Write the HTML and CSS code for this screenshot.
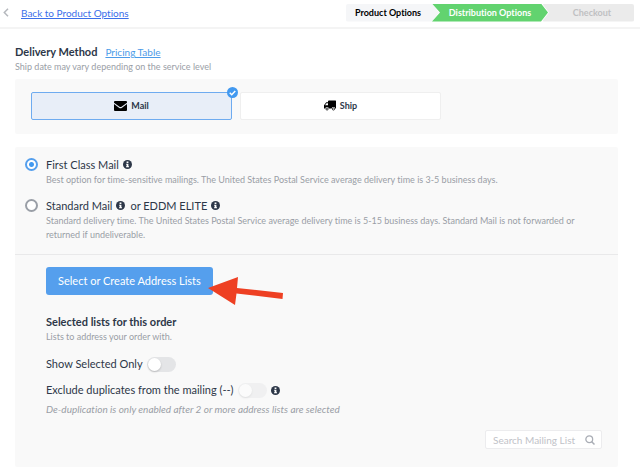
FILE: index.html
```html
<!DOCTYPE html>
<html lang="en">
<head>
<meta charset="utf-8">
<meta name="viewport" content="width=device-width, initial-scale=1">
<title>Distribution Options</title>
<link rel="stylesheet" href="styles.css">
</head>
<body>
<svg class="defs" aria-hidden="true">
  <symbol id="info" viewBox="0 0 20 20">
    <circle cx="10" cy="10" r="10" fill="#2d3748"/>
    <path d="M8 3.5h4v3.4H8zM7 8.3h5v5.4h1.4v2.4H6.8v-2.4h1.3v-3H7z" fill="#fff"/>
  </symbol>
</svg>
<header class="topbar">
  <a class="back" href="#">
    <svg class="chevron" viewBox="0 0 6 9" aria-hidden="true"><path d="M5 .8 1.3 4.5 5 8.2" fill="none" stroke="#b5b8bd" stroke-width="1.5"/></svg>
    <span class="back-text">Back to Product Options</span>
  </a>
  <ol class="steps">
    <li class="step done">Product Options</li>
    <li class="step current" aria-current="step">Distribution Options</li>
    <li class="step next">Checkout</li>
  </ol>
</header>
<main class="content">
  <div class="title-row">
    <h1 class="title">Delivery Method</h1>
    <a class="pricing" href="#">Pricing Table</a>
  </div>
  <p class="note">Ship date may vary depending on the service level</p>

  <section class="card methods">
    <button class="method selected" type="button" aria-pressed="true">
      <svg class="mail-icon" viewBox="0 0 26 20" aria-hidden="true"><path d="M2 0h22a2 2 0 0 1 2 2v1.5L15 11.4q-2 1.4-4 0L0 3.5V2a2 2 0 0 1 2-2zM0 6l10 7.3q3 2 6 0L26 6v12a2 2 0 0 1-2 2H2a2 2 0 0 1-2-2z"/></svg>
      Mail
      <svg class="check" viewBox="0 0 22 22" aria-hidden="true"><circle cx="11" cy="11" r="11" fill="#4299f0"/><path d="m5.5 11.5 4 4 7-7.5" fill="none" stroke="#fff" stroke-width="3"/></svg>
    </button>
    <button class="method" type="button" aria-pressed="false">
      <svg class="ship-icon" viewBox="0 0 24 20" aria-hidden="true"><path d="M10 0h13a1 1 0 0 1 1 1v15h-1.6a3.6 3.6 0 0 0-7 0H9.6a3.6 3.6 0 0 0-7 0H0V9.500L4.500 3.500H8V1.500Q8 0 10 0zM5 5.500 2 9.500h6v-4z" fill-rule="evenodd"/><circle cx="6.100" cy="17" r="2.200" fill="none" stroke="#000" stroke-width="1.500"/><circle cx="18.900" cy="17" r="2.200" fill="none" stroke="#000" stroke-width="1.500"/></svg>
      Ship
    </button>
  </section>

  <section class="card">
    <div class="classes">
      <div class="option">
        <input class="radio" type="radio" name="class" id="first" checked>
        <div class="option-body">
          <div class="option-title"><label for="first">First Class Mail</label><svg class="info" role="img" aria-label="Info"><use href="#info"/></svg></div>
          <p class="desc">Best option for time-sensitive mailings. The United States Postal Service average delivery time is 3-5 business days.</p>
        </div>
      </div>
      <div class="option">
        <input class="radio" type="radio" name="class" id="standard">
        <div class="option-body">
          <div class="option-title"><label for="standard">Standard Mail</label><svg class="info" role="img" aria-label="Info"><use href="#info"/></svg><label class="alt" for="standard">or EDDM ELITE</label><svg class="info" role="img" aria-label="Info"><use href="#info"/></svg></div>
          <p class="desc">Standard delivery time. The United States Postal Service average delivery time is 5-15 business days. Standard Mail is not forwarded or returned if undeliverable.</p>
        </div>
      </div>
    </div>
    <div class="lists">
      <div class="action">
        <button class="primary" type="button">Select or Create Address Lists</button>
        <svg class="arrow" viewBox="0 0 76 30" aria-hidden="true"><path d="M0 12 30 1 29 12 75 17 74.500 23 28.500 17.500 27 29z" fill="#ee4023"/></svg>
      </div>
      <h2 class="lists-title">Selected lists for this order</h2>
      <p class="note">Lists to address your order with.</p>
      <div class="toggle-row first-toggle">
        <label for="only">Show Selected Only</label>
        <input class="toggle" type="checkbox" role="switch" id="only">
      </div>
      <div class="toggle-row">
        <label for="dupes">Exclude duplicates from the mailing (--)</label>
        <input class="toggle" type="checkbox" role="switch" id="dupes" disabled>
        <svg class="info" role="img" aria-label="Info"><use href="#info"/></svg>
      </div>
      <p class="hint">De-duplication is only enabled after 2 or more address lists are selected</p>
      <div class="search">
        <input class="search-input" type="text" placeholder="Search Mailing List" aria-label="Search Mailing List">
        <svg class="search-icon" viewBox="0 0 20 20" aria-hidden="true"><circle cx="8.500" cy="8.500" r="6.800" fill="none" stroke="#a9adb5" stroke-width="2.600"/><path d="m13.500 13.500 5.500 5.500" stroke="#a9adb5" stroke-width="3"/></svg>
      </div>
    </div>
  </section>
</main>
</body>
</html>
```
FILE: styles.css
```css
* { box-sizing: border-box; }
body { margin: 0; background: #fff; color: #2d3748; font-family: Lato, "Liberation Sans", sans-serif; font-size: 11px; line-height: 16px; font-variant-ligatures: none; }
h1, h2, p, ol { margin: 0; padding: 0; }
button, input { font-family: inherit; margin: 0; }
svg { display: block; flex: none; }
.defs { position: absolute; width: 0; height: 0; }

.topbar { display: flex; align-items: center; justify-content: space-between; height: 29px; padding: 0 6px 2px 3px; border-bottom: 2px solid #f4f4f4; }
.back { display: flex; align-items: center; gap: 12px; color: #3b6fea; font-size: 10px; text-decoration: none; }
.back-text { text-decoration: underline; }
.chevron { width: 6px; height: 9px; }
.steps { display: flex; width: 288px; height: 18px; list-style: none; font-size: 9px; font-weight: 700; line-height: 18px; text-align: center; }
.step { height: 18px; }
.done { width: 93px; padding-right: 9px; background: #f5f6f8; color: #000; border-radius: 2px; clip-path: polygon(0 0, 86px 0, 100% 50%, 86px 100%, 0 100%); }
.current { width: 116px; margin-left: -7px; background: #62d36f; color: #fff; clip-path: polygon(0 0, 109px 0, 100% 50%, 109px 100%, 0 100%, 8px 50%); }
.next { flex: 1; margin-left: -6px; padding-left: 8px; background: #ebebeb; color: #bfc0c2; border-radius: 2px; clip-path: polygon(0 0, 100% 0, 100% 100%, 0 100%, 7px 50%); }

.content { padding: 15px 22px 0 15px; }
.title-row { display: flex; align-items: center; gap: 8px; }
.title { font-size: 11px; line-height: 16px; font-weight: 700; }
.pricing { color: #4d9be8; font-size: 10px; }
.note { color: #9a9ea6; font-size: 9px; line-height: 13px; }

.card { background: #f9f9f9; border-radius: 2px; }
.methods { display: flex; gap: 8px; margin: 6px 0 13px; padding: 13px 16px 14px; }
.method { position: relative; display: flex; align-items: center; justify-content: center; gap: 4px; width: 201px; height: 28px; padding: 0 0 1px; background: #fff; border: 1px solid #efefef; border-radius: 2px; color: #2d3748; font-size: 9px; font-weight: 700; }
.selected { background: #e8eef8; border-color: #6eabf0; }
.mail-icon { width: 13px; height: 10px; }
.ship-icon { width: 12px; height: 11px; }
.check { position: absolute; top: -6px; right: -7px; width: 11px; height: 11px; }

.classes { display: flex; flex-direction: column; gap: 10px; padding: 9px 16px 12px 10px; border-bottom: 1px solid #e9e9ea; }
.option { display: flex; gap: 8px; }
.radio { appearance: none; flex: none; width: 13px; height: 13px; margin-top: 2px; border: 2px solid #9a9fa7; border-radius: 50%; background: #fff; }
.radio:checked { border-color: #559fed; background: radial-gradient(circle, #4299f0 2px, #fff 3px); }
.option-title { display: flex; align-items: center; gap: 4px; line-height: 17px; }
.alt { margin-left: 1px; }
.info { width: 9px; height: 9px; }
.desc { color: #9a9ea6; font-size: 9px; line-height: 14px; }

.lists { padding: 12px 16px 18px 31px; }
.action { position: relative; display: flex; }
.primary { height: 28px; padding: 0 12px 1px; border: 0; border-radius: 3px; background: #559fed; color: #fff; font-size: 11px; }
.arrow { position: absolute; left: 162px; top: 9px; width: 76px; height: 30px; }
.lists-title { margin-top: 19px; font-size: 11px; line-height: 16px; font-weight: 700; }
.toggle-row { display: flex; align-items: center; gap: 4px; margin-top: 10px; }
.first-toggle { margin-top: 13px; }
.toggle { appearance: none; position: relative; width: 29px; height: 15px; border-radius: 8px; background: #e4e5e7; }
.toggle::before { content: ""; position: absolute; left: 1px; top: 1px; width: 13px; height: 13px; border-radius: 50%; background: #fff; box-shadow: 0 1px 2px #0003; }
.toggle:disabled { opacity: .4; }
.hint { margin-top: 3px; color: #9a9ea6; font-size: 10px; font-style: italic; }
.search { display: flex; align-items: center; width: 117px; height: 19px; margin: 13px 0 0 auto; padding: 0 6px 0 7px; border: 1px solid #ececee; border-radius: 2px; background: #fff; }
.search-input { flex: 1; min-width: 0; padding: 0; border: 0; outline: 0; background: none; color: #2d3748; font-size: 10px; }
.search-input::placeholder { color: #bfc2c8; }
.search-icon { width: 10px; height: 10px; }
```
